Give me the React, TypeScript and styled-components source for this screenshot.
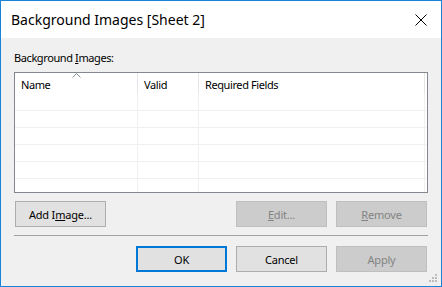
import React from 'react';
import styled, { createGlobalStyle } from 'styled-components';

const GlobalStyle = createGlobalStyle`
  html, body {
    margin: 0;
    padding: 0;
  }
  body {
    font-family: "Noto Sans", "Segoe UI", sans-serif;
    background: #f0f0f0;
  }
`;

const Window = styled.div`
  position: relative;
  display: flex;
  flex-direction: column;
  width: 442px;
  height: 287px;
  box-sizing: border-box;
  border: 1px solid #1883d7;
  background: #f0f0f0;
`;

const TitleBar = styled.div`
  display: flex;
  align-items: center;
  justify-content: space-between;
  height: 37px;
  padding: 0 14px 0 10px;
  background: #fff;
`;

const Title = styled.span`
  font-size: 14px;
  color: #000;
`;

const Body = styled.div`
  display: flex;
  flex-direction: column;
  flex: 1;
  padding: 12px 13px 0 13px;
`;

const Label = styled.div`
  height: 16px;
  line-height: 16px;
  font-size: 11px;
  letter-spacing: -0.4px;
  margin-bottom: 6px;
`;

const Table = styled.div`
  display: grid;
  grid-template-columns: 123px 61px 226px 1fr;
  grid-template-rows: 21px;
  grid-auto-rows: 17px;
  height: 121px;
  box-sizing: border-box;
  border: 1px solid #828790;
  background: #fff;
  overflow: hidden;
`;

const HeaderCell = styled.div<{ $last?: boolean }>`
  position: relative;
  display: flex;
  align-items: center;
  padding: 1px 0 0 6px;
  font-size: 11px;
  letter-spacing: -0.4px;
  border-right: ${p => (p.$last ? 'none' : '1px solid #e5e5e5')};
`;

const Cell = styled.div<{ $last?: boolean }>`
  border-bottom: 1px solid #f0f0f0;
  border-right: ${p => (p.$last ? 'none' : '1px solid #f0f0f0')};
`;

const SortArrow = styled.svg`
  position: absolute;
  top: 0;
  left: 57px;
`;

const ButtonRow = styled.div<{ $end?: boolean }>`
  display: flex;
  justify-content: ${p => (p.$end ? 'flex-end' : 'flex-start')};
  gap: 9px;
  padding: 0 1px;
  margin-top: ${p => (p.$end ? '10px' : '8px')};
`;

const Spacer = styled.div`
  flex: 1;
`;

const Separator = styled.div`
  height: 1px;
  margin-top: 8px;
  background: #a0a0a0;
`;

const Button = styled.button<{ $default?: boolean }>`
  width: 91px;
  height: 26px;
  box-sizing: border-box;
  padding: 0;
  font-family: inherit;
  font-size: 11px;
  letter-spacing: -0.2px;
  color: #000;
  background: #e1e1e1;
  border: ${p => (p.$default ? '2px solid #0078d7' : '1px solid #adadad')};

  &:disabled {
    color: #838383;
    background: #cccccc;
    border-color: #bfbfbf;
  }
`;

const Grip = styled.svg`
  position: absolute;
  right: 3px;
  bottom: 3px;
`;

const columns = ['Name', 'Valid', 'Required Fields', ''];

const App: React.FC = () => (
  <>
    <GlobalStyle />
    <Window>
      <TitleBar>
        <Title>Background Images [Sheet 2]</Title>
        <svg width="12" height="12" viewBox="0 0 12 12">
          <path d="M0.5 0.5 L11.5 11.5 M11.5 0.5 L0.5 11.5" stroke="#000" strokeWidth="1" fill="none" />
        </svg>
      </TitleBar>
      <Body>
        <Label>
          Background <u>I</u>mages:
        </Label>
        <Table>
          {columns.map((c, i) => (
            <HeaderCell key={c + i} $last={i === 3}>
              {i === 0 && (
                <SortArrow width="9" height="5" viewBox="0 0 9 5">
                  <polyline points="0.5,4.5 4.5,0.5 8.5,4.5" stroke="#8a9199" fill="none" />
                </SortArrow>
              )}
              {c}
            </HeaderCell>
          ))}
          {Array.from({ length: 6 }).map((_, r) =>
            columns.map((c, i) => <Cell key={`${r}-${i}`} $last={i === 3} />)
          )}
        </Table>
        <ButtonRow>
          <Button>
            Add I<u>m</u>age...
          </Button>
          <Spacer />
          <Button disabled>
            <u>E</u>dit...
          </Button>
          <Button disabled>
            <u>R</u>emove
          </Button>
        </ButtonRow>
        <Separator />
        <ButtonRow $end>
          <Button $default>OK</Button>
          <Button>Cancel</Button>
          <Button disabled>Apply</Button>
        </ButtonRow>
      </Body>
      <Grip width="9" height="9" viewBox="0 0 9 9">
        <g fill="#bcbcbc">
          <rect x="6" y="0" width="2" height="2" />
          <rect x="3" y="3" width="2" height="2" />
          <rect x="6" y="3" width="2" height="2" />
          <rect x="0" y="6" width="2" height="2" />
          <rect x="3" y="6" width="2" height="2" />
          <rect x="6" y="6" width="2" height="2" />
        </g>
      </Grip>
    </Window>
  </>
);

export default App;
